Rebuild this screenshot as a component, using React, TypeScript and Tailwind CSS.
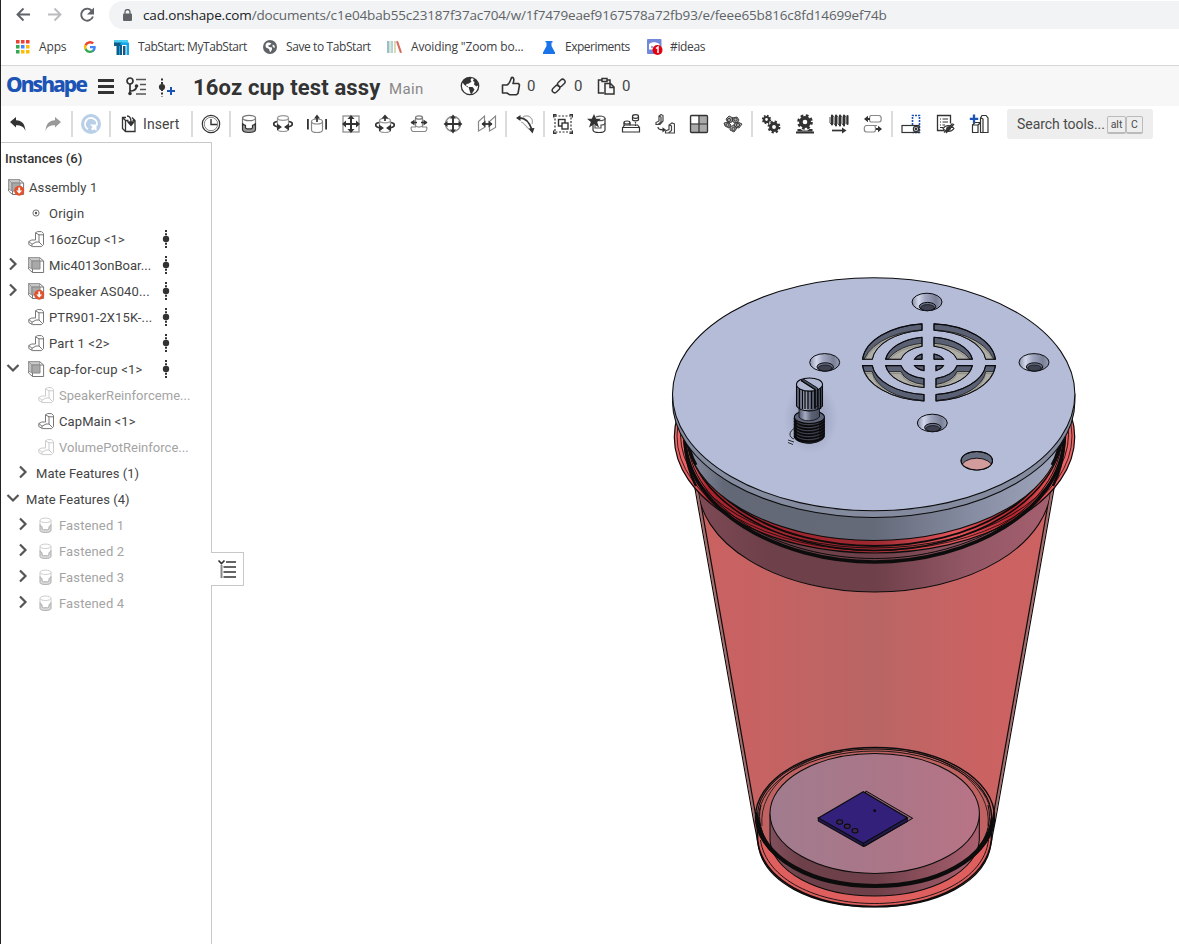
import React from "react";

const INK = "#333";

function Tool({ children, cell = "w-[34px]" }: { children: React.ReactNode; cell?: string }) {
  return (
    <div className={`flex h-full shrink-0 items-center justify-center ${cell}`}>
      <svg width="20" height="20" viewBox="0 0 20 20" fill="none" stroke={INK} strokeWidth="1.200">
        {children}
      </svg>
    </div>
  );
}

function Sep() {
  return (
    <div className="flex w-1 shrink-0 justify-center">
      <div className="h-[26px] w-[2px] bg-[#dcdcdc]" />
    </div>
  );
}

function GearShape({ cx, cy, r }: { cx: number; cy: number; r: number }) {
  return (
    <g>
      <circle cx={cx} cy={cy} r={r * 0.66} strokeWidth={r * 0.58} />
      <circle cx={cx} cy={cy} r={r * 1.02} strokeWidth={r * 0.45} strokeDasharray={`${r * 0.42} ${r * 0.381}`} />
    </g>
  );
}

function Toolbar() {
  return (
    <div className="flex h-9 items-center">
      <Tool cell="w-[34px]">
        <path d="M2 8 8 3v3.200c6 .3 9 3.500 9.500 11-1.600-4.600-4.500-5.800-9.500-5.900V13.500Z" fill={INK} stroke="none" />
      </Tool>
      <Tool cell="w-[35px]">
        <path d="M18 8 12 3v3.200c-6 .3-9 3.500-9.500 11 1.600-4.600 4.500-5.800 9.500-5.900v2.200Z" fill="#999" stroke="none" />
      </Tool>
      <Sep />
      <Tool>
        <circle cx="10" cy="10" r="10" fill="#b9cfe8" stroke="none" />
        <path d="M7 15.200A6 6 0 1 1 15.800 11.500" stroke="#fff" strokeWidth="1.900" />
        <path d="M9 10.500h6.500v6.500l-2.300-1.800-1.700 1.300-1.500-1.700 1.500-1.600Z" fill="#fff" stroke="none" />
      </Tool>
      <Sep />
      <div className="flex w-[78px] items-center pl-[9px]">
        <svg width="17" height="20" viewBox="0 0 17 20" fill="none" stroke={INK} strokeWidth="1.300">
          <path d="M5 3.500H1.500v11l3 3H14v-11l-3-3M1.500 3.500l3 3M4.500 6.500v11M4.500 6.500h3M11.500 6.500H14" />
          <path d="M6 2c3 0 4 2 4 6" />
          <path d="m7 8 3 3.500L13 8Z" fill={INK} />
        </svg>
        <span className="ml-[5px] text-[14px] tracking-[0.1px] text-[#444]">Insert</span>
      </div>
      <Sep />
      <Tool>
        <circle cx="10" cy="10" r="8.700" />
        <circle cx="10" cy="10" r="6.700" stroke="#666" strokeWidth=".8" />
        <path d="M10 5v5.500h6" strokeWidth="1.400" />
      </Tool>
      <Sep />
      <Tool>
        <path d="M3.500 9v6.500c0 1.800 3 3 6.500 3s6.500-1.200 6.500-3V9c0 1.500-1.500 2-3 2.400V14l-1.500.8H8L6.500 14v-2.600C4.500 11 3.500 10.500 3.500 9Z" fill="#999" />
        <path d="M3.500 9V4.200M16.500 9V4.200" stroke="#777" />
        <ellipse cx="10" cy="4" rx="6.500" ry="2.700" stroke="#777" />
      </Tool>
      <Tool>
        <path d="M4.500 4v11c0 1.500 2 2.500 5.500 2.500s5.500-1 5.500-2.500V4" stroke="#999" />
        <ellipse cx="10" cy="4" rx="5.500" ry="2.300" stroke="#999" />
        <path d="M4 7.500C-1 8.500-.5 12 5 13M16 7.500c5 1 4.500 4.500-1 5.500" strokeWidth="1.700" />
        <path d="m4 9.500 5 3.500L4 16.500ZM16 9.500 11 13l5 3.500Z" fill={INK} stroke="none" />
      </Tool>
      <Tool>
        <path d="M4.500 7.500v8.500c0 1.500 2 2.500 5.500 2.500s5.500-1 5.500-2.500V7.500" stroke="#888" />
        <ellipse cx="10" cy="7.500" rx="5.500" ry="2.500" stroke="#888" />
        <path d="M.9 5v10.500M19.100 5v10.500" strokeWidth="1.800" />
        <path d="M10 8V2" strokeWidth="1.700" />
        <path d="M7 4.500 10 .5l3 4Z" fill={INK} stroke="none" />
      </Tool>
      <Tool>
        <rect x="2" y="2" width="16" height="16" stroke="#888" />
        <path d="M10 2v16M2 10h16" strokeWidth="2" />
        <path d="M6.500 5 10 1l3.500 4ZM6.500 15l3.500 4 3.500-4ZM5 6.500 1 10l4 3.500ZM15 6.500l4 3.500-4 3.500Z" fill={INK} stroke="none" />
      </Tool>
      <Tool>
        <path d="M4.500 6.500v9.500c0 1.500 2 2.500 5.500 2.500s5.500-1 5.500-2.500V6.500" stroke="#999" />
        <ellipse cx="10" cy="6.500" rx="5.500" ry="2.300" stroke="#999" />
        <path d="M10 7V2M4 8.500C-1 9.500-.5 13 5 14M16 8.500c5 1 4.500 4.500-1 5.500" strokeWidth="1.700" />
        <path d="M6.500 4.500 10 .5l3.500 4ZM4 10.500 9 14l-5 3.500ZM16 10.500 11 14l5 3.500Z" fill={INK} stroke="none" />
      </Tool>
      <Tool>
        <path d="M6.500 4v9H2.500c-1 1 0 4.500 1.500 4.500h12c1.500 0 2.500-3.500 1.500-4.500h-4V4M6.500 12c2 1.200 5 1.200 7 0" stroke="#888" />
        <ellipse cx="10" cy="3.500" rx="3.500" ry="1.700" stroke="#777" />
        <path d="M2 8.500h6M12 8.500h6" strokeWidth="1.600" />
        <path d="M5.500 5.500 1.500 8.500l4 3ZM14.500 5.500l4 3-4 3Z" fill={INK} stroke="none" />
      </Tool>
      <Tool>
        <circle cx="10" cy="10" r="7.500" stroke="#888" strokeWidth="1.500" />
        <path d="M10 2v16M2 10h16" strokeWidth="1.900" />
        <path d="M7 4.500 10 .5l3 4ZM7 15.500l3 4 3-4ZM4.500 7 .5 10l4 3ZM15.500 7l4 3-4 3Z" fill={INK} stroke="none" />
      </Tool>
      <Tool>
        <path d="M1.500 17V7.500l6-5.500v11.500ZM12.500 17V7.500l6-5.500v11.500Z" stroke="#888" />
        <path d="M5 10h10" strokeWidth="1.800" />
        <path d="M8.500 6.500 4.500 10l4 3.500ZM11.500 6.500l4 3.500-4 3.500Z" fill={INK} stroke="none" />
      </Tool>
      <Sep />
      <Tool>
        <path d="M8 3c5-3 11 1 9 7M6 8c2 0 4 3 5 4 2 2 3 4 5 4" stroke="#aaa" />
        <path d="M2.500 4c7-1 12 4 14.500 12" strokeWidth="1.700" />
        <path d="M1 4 5.500 1v6ZM13.500 14.500l6-.5-2 5.500Z" fill={INK} stroke="none" />
      </Tool>
      <Sep />
      <Tool>
        <rect x="2" y="2" width="16" height="16" strokeDasharray="2 1.500" />
        <path d="M.5 3.500v-3h3M16.500.5h3v3M19.500 16.500v3h-3M3.500 19.500h-3v-3" strokeWidth="1.800" />
        <rect x="5.500" y="5.500" width="6.500" height="6.500" strokeWidth="1.400" />
        <rect x="9" y="9" width="6" height="6" fill="#fff" strokeWidth="1.400" />
      </Tool>
      <Tool>
        <path d="M6 6v10c0 1.500 2 2.500 6 2.500s6-1 6-2.500V4" />
        <path d="M9 3c4-2 9-.5 9 1.500S14 7 11 6.500M8 11v3h6v-3c2 0 4-.5 4-2" stroke="#555" />
        <path d="m7 0 2.200 4.800H14L10.200 8 12 13.500 7 10.300 2 13.500 3.800 8 0 4.800h4.800Z" fill={INK} stroke="none" />
      </Tool>
      <Tool>
        <path d="M2 13.500 3.500 11h13l2 2.500v4.500H1.500v-4.500ZM2 13.500h16" />
        <ellipse cx="6" cy="8.500" rx="3" ry="1.500" />
        <path d="M3 8.500v3M9 8.500v3" />
        <ellipse cx="14.500" cy="2.500" rx="3" ry="1.800" />
        <path d="M11.500 2.500v3.500c1.500 1.200 4.500 1.200 6 0V2.500" />
        <path d="M14.500 8v4" strokeDasharray="1.500 1" />
      </Tool>
      <Tool>
        <path d="M1 10.500V8.500l3-1.500V2l2-1.500 2 1v5.500l-3 3.500H1ZM4 2l2 1v5l-3 2.500" stroke="#444" />
        <path d="M10.500 19v-2l3.500-1.500V11l3-2 2.500 1v9ZM14 11l2.500 1v4.500l-3 2.500" stroke="#444" />
        <path d="M3 13c0 2.200 2 2.800 5 2.800" />
        <path d="m7.500 13.200 3.500 2.600-3.500 2.600Z" fill={INK} stroke="none" />
      </Tool>
      <Tool>
        <rect x="1.500" y="1.500" width="17" height="17" rx="1" fill="#aaa" stroke="#333" strokeWidth="1.300" />
        <rect x="2.500" y="2.500" width="7" height="7" fill="#fff" stroke="none" />
        <path d="M10 1.500v17M1.500 10h17" />
      </Tool>
      <Tool>
        <g fill="#aaa" strokeWidth=".9">
          <path d="m3 5 3-3 4 2-1 4-4 1ZM9 4l5-1 2 3-2 3-4-1ZM1 9l4-1 3 3-2 3-4-2ZM11 10l4-2 4 2-3 4-4-1ZM7 13l4-2 3 3-3 4-4-2Z" />
          <circle cx="6" cy="6" r="1.600" /><circle cx="12.500" cy="5.500" r="1.600" /><circle cx="4.500" cy="11" r="1.600" /><circle cx="15" cy="11" r="1.600" /><circle cx="10.500" cy="15" r="1.600" />
        </g>
      </Tool>
      <Sep />
      <Tool>
        <GearShape cx={5.5} cy={5.5} r={3.8} />
        <GearShape cx={13} cy={13} r={5.2} />
      </Tool>
      <Tool>
        <GearShape cx={10} cy={8} r={6.3} />
        <path d="M1 18.500h18" strokeWidth="2" />
        <path d="M2.500 17.500v-2.500h3l2 1.500h5l2-1.500h3v2.500Z" fill={INK} stroke="none" />
      </Tool>
      <Tool>
        <path d="M3 1.500v9M7 1.500v10M11 1.500v10M15 1.500v10M18.500 2v8" strokeWidth="2.100" strokeLinecap="round" />
        <path d="M1 3v6l2 2M3 1.500l2 1V10l2 1.500M7 1.500l2 1V10l2 1.500M11 1.500l2 1V10l2 1.500M15 1.500l2 1V10" strokeWidth=".9" />
        <path d="M3 16.500h12" strokeWidth="1.700" />
        <path d="m13 13.500 4.500 3-4.500 3Z" fill={INK} stroke="none" />
      </Tool>
      <Tool>
        <path d="M8 1.500h8c3 0 3 6.500 0 6.500H8C6 8 6 1.500 8 1.500ZM14 11.500H3.500c-3 0-3 6.500 0 6.500H11c2 0 2-6.500 0-6.500" stroke="#888" />
        <path d="M2 5h5M13 15h5" strokeWidth="1.900" />
        <path d="M5 1.800 1 5l4 3.200ZM15 11.800l4 3.200-4 3.200Z" fill={INK} stroke="none" />
      </Tool>
      <Sep />
      <Tool>
        <path d="M11.500 11V1.500h7v17h-7" stroke="#1b54b4" strokeWidth="1.600" strokeDasharray="2 1" />
        <rect x="1" y="11.500" width="17" height="7" />
        <circle cx="15" cy="15" r="2.600" /><circle cx="15" cy="15" r=".8" fill={INK} />
      </Tool>
      <Tool>
        <path d="M9 16.500H2.500v-15h13v8" strokeWidth="1.300" />
        <path d="M5 5h1M7.500 5H13M5 8h1M7.500 8H13M5 11h1M7.500 11H10M5 13.500h3" />
        <path d="M8 14.500c3-4 8-4 11 0-3 4-8 4-11 0ZM9 18.500l8.500-9M11 19l8-9" />
        <circle cx="13.500" cy="14.500" r="1.700" fill={INK} />
      </Tool>
      <Tool>
        <path d="M3.500 11v7.500H9V11ZM11.500 18.500V4l1.500-2.500h4l2 2.500v14.500ZM11.500 3.500 14 5v13.500M3.500 11 6 8.500h5.500M9 11l2.500-2.500" />
        <path d="M5 .5v8.500M.8 4.800h8.400" stroke="#1b54b4" strokeWidth="2.300" />
      </Tool>
      <div className="ml-[11px] flex h-[30px] w-[146px] items-center rounded-[3px] bg-[#eee] pl-[10px] text-[#4a4a4a]">
        <span className="w-[87px] whitespace-nowrap pt-[1px] text-[14px] tracking-[-0.050px]">Search tools...</span>
        <span className="ml-[3px] mt-[2px] flex text-[10.500px] leading-[15px]">
          <kbd className="w-[19px] rounded-[2px] border border-b-2 border-[#bbb] text-center font-[inherit]">alt</kbd>
          <kbd className="w-[17px] rounded-[2px] border border-b-2 border-[#bbb] text-center font-[inherit]">C</kbd>
        </span>
      </div>
    </div>
  );
}

function Browser() {
  return (
    <div className="h-[66px] border-b border-[#d6d7d9] bg-white font-['Open_Sans','Noto_Sans',sans-serif]">
      <div className="flex h-[29px] items-center pt-px">
        <svg className="ml-[14px]" width="80" height="18" viewBox="0 0 80 18" fill="none" strokeWidth="1.900">
          <path d="M15 8.500H2.500M8.500 2.500l-6 6 6 6" stroke="#5f6368" />
          <path d="M33 8.500h12.500M39.500 2.500l6 6-6 6" stroke="#babcbe" />
          <path d="M76.500 4.500a6 6 0 1 0 1.400 6" stroke="#5f6368" />
          <path d="M79 1.500v7h-7Z" fill="#5f6368" />
        </svg>
        <div className="ml-[14px] flex h-7 flex-1 items-center rounded-l-full bg-[#f1f3f4] pl-[14px]">
          <svg width="9" height="12" viewBox="0 0 9 12">
            <rect y="4.500" width="9" height="7.500" rx="1" fill="#5f6368" />
            <path d="M2 5V3a2.500 2.500 0 0 1 5 0v2" fill="none" stroke="#5f6368" strokeWidth="1.300" />
          </svg>
          <div className="ml-[11px] whitespace-nowrap text-[13.500px] tracking-[-0.150px] text-[#5f6368]">
            <span className="text-[#202124]">cad.onshape.com</span>/documents/c1e04bab55c23187f37ac704/w/1f7479eaef9167578a72fb93/e/feee65b816c8fd14699ef74b
          </div>
        </div>
      </div>
      <div className="flex h-9 items-center whitespace-nowrap text-[12px] tracking-[-0.150px] text-[#3c4043]">
        <svg className="ml-[15px] shrink-0" width="14" height="14" viewBox="0 0 14 14">
          <path d="M0 0h3.500v3.500H0ZM5 0h3.500v3.500H5ZM10 0h3.500v3.500H10Z" fill="#ea4335" />
          <path d="M0 5h3.500v3.500H0ZM0 10h3.500v3.500H0Z" fill="#34a853" />
          <path d="M5 5h3.500v3.500H5Z" fill="#4285f4" />
          <path d="M10 5h3.500v3.500H10ZM5 10h3.500v3.500H5ZM10 10h3.500v3.500H10Z" fill="#fbbc05" />
        </svg>
        <span className="ml-[9px] w-[45px]">Apps</span>
        <svg className="shrink-0" width="12" height="12" viewBox="0 0 24 24">
          <path fill="#4285f4" d="M23.500 12.300c0-.8-.1-1.600-.2-2.300H12v4.600h6.500c-.3 1.500-1.200 2.700-2.400 3.600v3h3.900c2.200-2.100 3.500-5.200 3.500-8.900Z" />
          <path fill="#34a853" d="M12 24c3.200 0 6-1.100 8-2.900l-3.900-3c-1.100.7-2.500 1.200-4.100 1.200-3.100 0-5.800-2.100-6.700-5H1.300v3.100C3.300 21.300 7.300 24 12 24Z" />
          <path fill="#fbbc05" d="M5.300 14.300a7.200 7.200 0 0 1 0-4.600V6.600h-4a12 12 0 0 0 0 10.800Z" />
          <path fill="#ea4335" d="M12 4.800c1.800 0 3.300.6 4.600 1.800L20 3.200A12 12 0 0 0 1.300 6.600l4 3.100c.9-2.900 3.600-4.900 6.700-4.900Z" />
        </svg>
        <svg className="ml-[18px] shrink-0" width="15" height="15" viewBox="0 0 15 15">
          <path d="M0 0h14v3H0Z" fill="#4bd0f2" />
          <path d="M0 2.500h8V5H5v10H2.500V6H0ZM9 6h2.500v9H9Z" fill="#145a86" />
          <path d="M5 5h3v10H5Z" fill="#145a86" /><path d="M6.500 2.500H15V5H6.500ZM5 6h1v9H5ZM12.500 5H15v10h-2.500Z" fill="#10a7e8" />
        </svg>
        <span className="ml-[9px] w-[125px] tracking-[-0.450px]">TabStart: MyTabStart</span>
        <svg className="shrink-0" width="14" height="14" viewBox="0 0 14 14">
          <circle cx="7" cy="7" r="7" fill="#5f6368" />
          <path d="M2.500 6c0-2 1-3.500 3-3.500l3 .8L7 5 5 5.500l1 1.500 3 .5v2L7.500 12H7l-1-3-3-1.500ZM9.500 4.500l2 1 .3 2.500-2-1Z" fill="#fff" />
        </svg>
        <span className="ml-[9px] w-[101px] tracking-[-0.400px]">Save to TabStart</span>
        <svg className="shrink-0" width="15" height="12" viewBox="0 0 15 12">
          <path d="M0 0h2.500v12H0Z" fill="#9bbfbe" /><path d="M3.500 0H6v12H3.500Z" fill="#b5d5d3" />
          <path d="M7 0h2v12H7Z" fill="#dddbb5" /><path d="m9 .5 2-.5 4 11.500-2 .5Z" fill="#d66a5e" />
        </svg>
        <span className="ml-[9px] w-[132px]">Avoiding "Zoom bo...</span>
        <svg className="shrink-0" width="12" height="13" viewBox="0 0 12 13">
          <path d="M2.500 0h7v1.500H8.500V5L12 11.500V13H0v-1.500L3.500 5V1.500h-1Z" fill="#1a73e8" />
        </svg>
        <span className="ml-[10px] w-[82px] tracking-[-0.500px]">Experiments</span>
        <svg className="shrink-0" width="16" height="16" viewBox="0 0 16 16">
          <rect width="14.500" height="15" rx="1" fill="#7289da" />
          <path d="M2 5c3-2.500 7-2.500 10.500 0v5.500H2Z" fill="#fff" />
          <circle cx="5" cy="8" r="1" fill="#7289da" />
          <circle cx="10.500" cy="11" r="5" fill="#e3000f" />
          <path d="m9 9.500 2-1.500v6" stroke="#fff" strokeWidth="1.500" fill="none" />
        </svg>
        <span className="ml-[7px] tracking-[-0.350px]">#ideas</span>
      </div>
    </div>
  );
}

function Header() {
  return (
    <div className="flex h-10 items-center whitespace-nowrap bg-[#f7f7f7] text-[#333]">
      <span className="ml-[5px] w-[92px] pb-[2px] font-['Noto_Sans',sans-serif] text-[21px] font-extrabold tracking-[-2px] text-[#1b54b4]">Onshape</span>
      <div className="flex w-4 flex-col gap-[3px] pt-[1px]">
        <i className="h-[3px] bg-[#333]" />
        <i className="h-[3px] bg-[#333]" />
        <i className="h-[3px] bg-[#333]" />
      </div>
      <svg className="ml-[12px] mt-[2px] shrink-0" width="21" height="20" viewBox="0 0 21 20" fill="none" stroke="#333" strokeWidth="1.700">
        <circle cx="4" cy="4" r="3" /><path d="M4 7v10M4 14c5 0 6.500-2 6.500-5" />
        <circle cx="4" cy="16.500" r="1.800" fill="#333" stroke="none" /><circle cx="10.500" cy="9" r="1.800" fill="#333" stroke="none" />
        <path d="M10 2.500h10M14 7.500h6M14 12.500h6M10 17h10" stroke="#555" strokeWidth="1.400" />
      </svg>
      <svg className="ml-[11px] mt-[3px] shrink-0" width="17" height="20" viewBox="0 0 17 20">
        <circle cx="4" cy="9" r="3.100" fill="#333" />
        <path d="M4 .5v18" stroke="#333" strokeWidth="2" strokeDasharray="2 1.500" />
        <path d="M13 9v8M9 13h8" stroke="#1b54b4" strokeWidth="2" />
      </svg>
      <span className="ml-[18px] w-[196px] pt-[2px] text-[22px] font-bold tracking-[0.150px]">16oz cup test assy</span>
      <span className="w-[71px] pt-[6px] text-[15px] tracking-[0.400px] text-[#888]">Main</span>
      <svg className="shrink-0" width="20" height="20" viewBox="0 0 20 20">
        <circle cx="10" cy="10" r="8.700" fill="#fff" stroke="#333" strokeWidth="1.300" />
        <path d="M2 6c1-2.500 4-4.500 6.500-4.500l3 .5-1 2 1 1.500L9 7.500 6.500 8 6 9.500l2 1v1L4.500 9ZM8.500 11l4 0 2 2.500-1.500 2.500-2 2.500-1-2.500ZM14 2.500l3 2.500 1.500 4-2 1.500-2.500-2 .5-2.500-1.500-1Z" fill="#333" />
      </svg>
      <svg className="ml-[21px] shrink-0" width="20" height="20" viewBox="0 0 20 20" fill="none" stroke="#333" strokeWidth="1.600">
        <path d="M1.500 9H6c3-1.500 3.500-4.500 4.500-7.500 2.500-.5 3 2 1.500 6h5.500l1 1.500-1.500 8.500-1.500 1.200H8.500L6 17H1.500Z" strokeLinejoin="round" />
      </svg>
      <span className="ml-[6px] w-[23px] text-[15px] text-[#444]">0</span>
      <svg className="shrink-0" width="18" height="18" viewBox="0 0 18 18" fill="none" stroke="#333" strokeWidth="1.400">
        <rect x="-4.300" y="-2.500" width="8.600" height="5" rx="2.500" transform="translate(11.300 6) rotate(-45)" />
        <rect x="-4.300" y="-2.500" width="8.600" height="5" rx="2.500" transform="translate(6 12) rotate(-45)" />
      </svg>
      <span className="ml-[6px] w-[23px] text-[15px] text-[#444]">0</span>
      <svg className="shrink-0" width="18" height="18" viewBox="0 0 18 18" fill="none" stroke="#333" strokeWidth="1.500">
        <path d="M7 16H1.500V3H5M10 3h3v3M5 1.500h5v3H5Z" /><path d="M8 6.500h5.500l3.500 3.500v7H8ZM13 7v3.500h4" fill="#f7f7f7" />
      </svg>
      <span className="ml-[7px] text-[15px] text-[#444]">0</span>
    </div>
  );
}

type Kind = "asm" | "asmLink" | "part" | "mate" | "origin" | "none";

function RowIcon({ kind, dim }: { kind: Kind; dim?: boolean }) {
  const c = dim ? "#ccc" : "#777";
  if (kind === "none") return null;
  return (
    <svg className="shrink-0" width="17" height="17" viewBox="0 0 17 17" fill="none" stroke={c} strokeWidth="1">
      {(kind === "asm" || kind === "asmLink") && (
        <>
          <path d="M.6.6h11l4 3.400v11.500H4.500L.6 12Z" fill="#fff" />
          <path d="M.6.6h11V4H4Z" fill="#c9c9c9" stroke="#999" />
          <path d="M.6.6 4 4v8L.6 10Z" fill="#c4c4c4" stroke="#999" />
          <path d="M4 4h8v8H4Z" fill="#a9a9a9" stroke="#888" />
          <path d="M4.500 15.500V12M12 4h3.600" />
        </>
      )}
      {kind === "asmLink" && (
        <>
          <circle cx="11.200" cy="11.800" r="5" fill="#e0512c" stroke="none" />
          <path d="M11.200 8.500v4" stroke="#fff" strokeWidth="1.800" /><path d="M8.200 11.500h6l-3 3.300Z" fill="#fff" stroke="none" />
        </>
      )}
      {kind === "part" && (
        <path d="M7.500 1.800 9.500.6h4l2 2v11l-2 2H4.500L.8 13.500v-3l3-1.500h3.700ZM7.500 1.800l3.500 2h4.500M11 3.800V11h-3l-4 2.200v2.300M.8 10.500l3.200 2.700M11 11l3.500 3.500" strokeLinejoin="round" />
      )}
      {kind === "mate" && (
        <>
          <path d="M2 7.500v6c0 1.200 2.500 2 5.500 2s5.500-.8 5.500-2v-6c0 1-1 1.700-2 2V12l-1.500.8h-4L4 12V9.500c-1-.3-2-1-2-2Z" fill="#ddd" stroke="#aaa" />
          <path d="M2 8V3.500M13 8V3.500" /><ellipse cx="7.500" cy="3.300" rx="5.500" ry="2.200" />
        </>
      )}
      {kind === "origin" && (
        <>
          <circle cx="8" cy="8" r="3.100" /><circle cx="8" cy="8" r="1.200" fill="#555" stroke="none" />
        </>
      )}
    </svg>
  );
}

type RowData = { label: string; kind: Kind; pad: string; track: string; open?: boolean; arrow?: boolean; dim?: boolean; dots?: boolean; root?: boolean };

const rows: RowData[] = [
  { label: "Assembly 1", kind: "asmLink", pad: "pl-[7px]", track: "tracking-[0.1px]", root: true },
  { label: "Origin", kind: "origin", pad: "pl-[4px]", track: "tracking-[0.2px]" },
  { label: "16ozCup <1>", kind: "part", pad: "pl-[4px]", track: "tracking-[0.05px]", dots: true },
  { label: "Mic4013onBoar...", kind: "asm", pad: "pl-[4px]", track: "tracking-[0.03px]", arrow: true, dots: true },
  { label: "Speaker AS040...", kind: "asmLink", pad: "pl-[4px]", track: "tracking-[0.15px]", arrow: true, dots: true },
  { label: "PTR901-2X15K-...", kind: "part", pad: "pl-[4px]", track: "tracking-[0.13px]", dots: true },
  { label: "Part 1 <2>", kind: "part", pad: "pl-[4px]", track: "tracking-[0.2px]", dots: true },
  { label: "cap-for-cup <1>", kind: "asm", pad: "pl-[4px]", track: "tracking-[0.25px]", arrow: true, open: true, dots: true },
  { label: "SpeakerReinforceme...", kind: "part", pad: "pl-[14px]", track: "tracking-[0.05px]", dim: true },
  { label: "CapMain <1>", kind: "part", pad: "pl-[14px]", track: "tracking-[0.1px]" },
  { label: "VolumePotReinforce...", kind: "part", pad: "pl-[14px]", track: "tracking-[0.02px]", dim: true },
  { label: "Mate Features (1)", kind: "none", pad: "pl-[14px]", track: "tracking-[0.03px]", arrow: true },
  { label: "Mate Features (4)", kind: "none", pad: "pl-[4px]", track: "tracking-[0.06px]", arrow: true, open: true },
  { label: "Fastened 1", kind: "mate", pad: "pl-[14px]", track: "tracking-[0.13px]", arrow: true, dim: true },
  { label: "Fastened 2", kind: "mate", pad: "pl-[14px]", track: "tracking-[0.13px]", arrow: true, dim: true },
  { label: "Fastened 3", kind: "mate", pad: "pl-[14px]", track: "tracking-[0.13px]", arrow: true, dim: true },
  { label: "Fastened 4", kind: "mate", pad: "pl-[14px]", track: "tracking-[0.13px]", arrow: true, dim: true },
];

function Sidebar() {
  return (
    <aside className="w-[211px] shrink-0 border-r border-t border-[#c8c8c8] bg-white text-[#333]">
      <div className="flex h-[31px] items-center pl-[4px] text-[13.200px] font-medium">Instances (6)</div>
      {rows.map((r) => (
        <div key={r.label} className={`flex h-[26px] items-center whitespace-nowrap text-[13px] ${r.pad} ${r.dim ? "text-[#a4a4a4]" : "text-[#444]"}`}>
          {!r.root && (
            <svg className={`shrink-0 ${r.kind === "none" ? "mr-[5px]" : "mr-[7px]"}`} width="16" height="16" viewBox="0 0 16 16" fill="none" stroke="#555" strokeWidth="2.200">
              {r.arrow && (r.open ? <path d="m2.500 4 5.500 5.500L13.500 4" /> : <path d="m5 1.500 5.500 5.500L5 12.500" />)}
            </svg>
          )}
          <RowIcon kind={r.kind} dim={r.dim} />
          <span className={`pt-[2px] ${r.kind === "none" ? "" : "ml-[4px]"} ${r.track}`}>{r.label}</span>
          {r.dots && (
            <svg className="ml-auto mr-[41px] shrink-0" width="8" height="18" viewBox="0 0 8 18">
              <circle cx="4" cy="9" r="3.200" fill="#333" />
              <path d="M4 0v18" stroke="#333" strokeWidth="2" strokeDasharray="2 1.200" />
            </svg>
          )}
        </div>
      ))}
    </aside>
  );
}

const G = { x: 929, y: 362.4 };

function slot(ox: number, oy: number, ix: number, iy: number, sx: number, sy: number) {
  const cx = G.x + (sy > 0 ? 1 : -1);
  const gx = 6;
  const gy = 3.2;
  const yAt = (rx: number, ry: number) => G.y + sy * ry * Math.sqrt(1 - (gx / rx) ** 2);
  const xAt = (rx: number, ry: number) => G.x + sx * rx * Math.sqrt(1 - (gy / ry) ** 2);
  const vx = cx + sx * gx;
  const hy = G.y + sy * gy;
  const sweep = sx * sy > 0 ? 0 : 1;
  const start = `M${vx} ${yAt(ox, oy)}A${ox} ${oy} 0 0 ${sweep} ${xAt(ox, oy)} ${hy}`;
  if (!ix) return `${start}H${vx}Z`;
  return `${start}H${xAt(ix, iy)}A${ix} ${iy} 0 0 ${1 - sweep} ${vx} ${yAt(ix, iy)}Z`;
}

function Grille() {
  const rings = [
    [66.7, 38.7, 57, 32.3],
    [43.7, 25.3, 28.5, 16.5],
    [15.5, 9, 0, 0],
  ];
  const quads = [[-1, -1], [1, -1], [-1, 1], [1, 1]];
  return (
    <g>
      {rings.flatMap((r, i) =>
        quads.map(([sx, sy], j) => {
          const d = slot(r[0], r[1], r[2], r[3], sx, sy);
          const id = `slot${i}${j}`;
          return (
            <g key={id}>
              <clipPath id={id}><path d={d} /></clipPath>
              <path d={d} fill="#5b6175" />
              <g clipPath={`url(#${id})`}>
                {i < 2 && <path d={d} transform="translate(0 6)" fill="#aeada6" stroke="#111" strokeWidth=".8" />}
                {i < 2 && <path d={d} transform="translate(0 8)" fill="none" stroke="#6a6a62" strokeWidth=".5" />}
              </g>
              <path d={d} fill="none" stroke="#0c0c10" strokeWidth=".95" />
            </g>
          );
        })
      )}
    </g>
  );
}

function Screw({ x, y }: { x: number; y: number }) {
  return (
    <g stroke="#0c0c10" strokeWidth="1">
      <ellipse cx={x} cy={y} rx="15" ry="8.800" fill="url(#sink)" />
      <ellipse cx={x + 0.5} cy={y + 4.5} rx="8.200" ry="4.100" fill="#6d7388" />
      <ellipse cx={x + 0.5} cy={y + 5.6} rx="6.800" ry="3" fill="#3d4150" strokeWidth=".7" />
    </g>
  );
}

function Knob() {
  return (
    <g stroke="#08080a">
      <ellipse cx="811" cy="418" rx="27" ry="36" fill="url(#ao)" stroke="none" />
      <path d="M795 428c-6 3-7 9-1 11M788 440l6 2M788 442.500l5 2" fill="none" strokeWidth=".8" />
      <path d="M794.300 418v19c2 5 12 7 18 6 7-1 12-4 12-8v-17Z" fill="#23252c" />
      {[0, 1, 2, 3, 4, 5, 6].map((i) => (
        <path key={i} d={`M794.300 ${418 + i * 3}c4 7 24 7 30.200 0`} fill="none" strokeWidth="1.700" />
      ))}
      {[0, 1, 2, 3, 4, 5].map((i) => (
        <path key={i} d={`M797 ${421.5 + i * 3}c5 4 15 4 22 1`} fill="none" stroke="#565b69" strokeWidth=".6" />
      ))}
      <ellipse cx="809.400" cy="417" rx="15" ry="6.500" fill="#60667a" />
      <path d="M799 407v10c3 5 16 5 20.500 0v-10Z" fill="url(#metal)" strokeWidth=".8" />
      <path d="M796.500 384v22c4 6 20 7 26 0v-22Z" fill="url(#metal)" />
      {[799.5, 802.5, 805, 808, 811.5, 815, 818, 820.5].map((x) => (
        <path key={x} d={`M${x} 387v22`} strokeWidth="1.300" />
      ))}
      <ellipse cx="809.500" cy="384.500" rx="13" ry="6.600" fill="#b0b7d2" />
      <path d="m801 380.500 14 9v18l2.500-1.500V388L804 379.500Z" fill="#4a4f60" strokeWidth=".9" />
      <path d="m801 380.500 14 9v18" fill="none" strokeWidth="1.300" />
    </g>
  );
}

function Model() {
  return (
    <svg className="block" width="967" height="802" viewBox="212 142 967 802" fill="none" stroke="#0c0c0c" strokeWidth="1.050">
      <defs>
        <linearGradient id="body" gradientUnits="userSpaceOnUse" x1="695" y1="0" x2="1055" y2="0">
          <stop offset="0" stopColor="#ca6161" /><stop offset=".15" stopColor="#c86262" />
          <stop offset=".5" stopColor="#b96565" /><stop offset=".65" stopColor="#c36464" /><stop offset=".8" stopColor="#cb6262" /><stop offset="1" stopColor="#cd6161" />
        </linearGradient>
        <linearGradient id="maroon" gradientUnits="userSpaceOnUse" x1="695" y1="0" x2="1055" y2="0">
          <stop offset="0" stopColor="#7e4a56" /><stop offset=".2" stopColor="#6e4049" />
          <stop offset=".5" stopColor="#6e4049" /><stop offset=".75" stopColor="#925664" /><stop offset="1" stopColor="#a66070" />
        </linearGradient>
        <linearGradient id="wall" gradientUnits="userSpaceOnUse" x1="686" y1="0" x2="1062" y2="0">
          <stop offset="0" stopColor="#8b91a5" /><stop offset=".1" stopColor="#636877" />
          <stop offset=".5" stopColor="#656a79" /><stop offset=".75" stopColor="#858ba0" /><stop offset="1" stopColor="#a0a6bd" />
        </linearGradient>
        <linearGradient id="rim" gradientUnits="userSpaceOnUse" x1="672" y1="0" x2="1075" y2="0">
          <stop offset="0" stopColor="#ef6a6a" /><stop offset=".05" stopColor="#ea5a5e" /><stop offset=".09" stopColor="#a8232c" /><stop offset=".5" stopColor="#9c2830" />
          <stop offset=".7" stopColor="#e3565b" /><stop offset=".85" stopColor="#b8232c" /><stop offset=".95" stopColor="#ea5a5e" /><stop offset="1" stopColor="#ef6a6a" />
        </linearGradient>
        <linearGradient id="discTop" x1="0" y1="0" x2="1" y2="0">
          <stop offset="0" stopColor="#a17c8e" /><stop offset=".5" stopColor="#a97688" /><stop offset="1" stopColor="#b87486" />
        </linearGradient>
        <linearGradient id="discWall" x1="0" y1="0" x2="1" y2="0">
          <stop offset="0" stopColor="#80505c" /><stop offset=".15" stopColor="#6e4049" />
          <stop offset=".5" stopColor="#6e4049" /><stop offset="1" stopColor="#aa6070" />
        </linearGradient>
        <linearGradient id="sink" x1="0" y1="0" x2="1" y2="0">
          <stop offset="0" stopColor="#8a90a8" /><stop offset=".22" stopColor="#d3d8ec" /><stop offset=".45" stopColor="#a0a6bf" />
          <stop offset=".8" stopColor="#7a8096" /><stop offset="1" stopColor="#9aa0b8" />
        </linearGradient>
        <linearGradient id="metal" x1="0" y1="0" x2="1" y2="0">
          <stop offset="0" stopColor="#50566a" /><stop offset=".3" stopColor="#a5abc2" /><stop offset=".6" stopColor="#5c6275" /><stop offset="1" stopColor="#4c5161" />
        </linearGradient>
        <radialGradient id="ao"><stop offset="0" stopColor="#8087a5" stopOpacity=".6" /><stop offset=".5" stopColor="#8087a5" stopOpacity=".35" /><stop offset="1" stopColor="#8087a5" stopOpacity="0" /></radialGradient>
        <clipPath id="bodyClip"><path d="M674 420 698.300 490 756.500 820H992.500L1050.700 490 1075 420Z" /></clipPath>
        <clipPath id="thru"><ellipse cx="976.800" cy="460.700" rx="15.700" ry="9.300" /></clipPath>
      </defs>

      <path d="M693.500 480 753.500 820 758 843C762 882 812 907 874.500 907S987 882 991 843L995.500 820 1055.500 480Z" fill="url(#body)" strokeWidth="1.200" />
      <path d="M696.800 490 755 820M1052.200 490 994 820" strokeWidth="2" stroke="#a07070" />
      <path d="M698.500 490 756.500 820M1050.500 490 992.500 820" strokeWidth="1.200" />

      <g clipPath="url(#bodyClip)">
        <ellipse cx="874.500" cy="485" rx="176.500" ry="107" fill="url(#maroon)" />
      </g>

      <path d="M758.500 842C764 884 818 906 874.500 906S985 884 990.500 842L989 800H760Z" fill="#df5f5f" stroke="none" />
      <ellipse cx="874.500" cy="816" rx="117" ry="67" fill="#c06262" />
      <ellipse cx="875" cy="817" rx="119.500" ry="69.500" strokeWidth="1.400" />
      <ellipse cx="875" cy="818" rx="116.500" ry="67" strokeWidth=".9" />
      <path d="M762 826c-4-40 40-70 80-74M988 826c4-40-40-70-80-74" strokeWidth=".8" />
      <path d="M770 814v26a104.700 57.800 0 0 0 209.300 0v-26Z" fill="url(#discWall)" />
      <ellipse cx="874.700" cy="813.400" rx="104.700" ry="60" fill="url(#discTop)" />
      <path d="M756 812C755 853 806 886 875 886S995 853 994 812" strokeWidth="2.200" />
      <path d="M757 818C762 859 812 886 875 886S988 859 993 818" strokeWidth="4.200" />
      <path d="M757.500 825v15C762 880 812 906.500 874.500 906.500S987 880 991.500 840v-15" strokeWidth="1.700" />
      <path d="M760.500 840C766 880 818 903.500 874.500 903.500S984 880 988.500 840" strokeWidth=".9" />
      <path d="M761 805c-4 16 1 29 7 39M988 805c4 16-1 29-7 39" strokeWidth="1" />

      <path d="m866 791 46.700 27.300L864.500 846.500 863 842l44-24.500-42-24Z" fill="#8d6274" strokeWidth="1" />
      <path d="M818.300 818v3l45 25.500 44-25v-3.500Z" fill="#221a50" />
      <path d="m818.300 818 45-26.300 44 26-44 25.600Z" fill="#32207b" />
      <path d="M863.300 843.300v3.200" />
      {[[839.7, 822], [847.3, 826.3], [855, 830.7]].map(([x, y]) => (
        <ellipse key={x} cx={x} cy={y} rx="3" ry="2.200" fill="#3a2556" />
      ))}
      <circle cx="874.700" cy="810.700" r=".9" fill="#0c0c0c" />

      <ellipse cx="874.500" cy="437" rx="200.200" ry="116" fill="url(#rim)" strokeWidth="1.200" />
      <ellipse cx="874.500" cy="436" rx="197.500" ry="114.500" strokeWidth=".8" />
      <ellipse cx="874.500" cy="434.500" rx="194" ry="113.500" strokeWidth=".9" />
      <path d="M684 436C686 462 690 474 696 486M1065 436C1063 462 1059 474 1053 486" strokeWidth="2.600" />
      <path d="M685 440C688 510 778 562 874.500 562S1061 510 1064 440" strokeWidth="3.600" />
      <path d="M687 437C690 508 778 558.500 874.500 558.500S1059 508 1062 437" strokeWidth="1" />
      <path d="M686 432C690 500 778 550.500 874.500 550.500S1059 500 1063 432" strokeWidth="1.500" />
      <path d="M688 430C692 498 778 546 874.500 546S1057 498 1061 430" strokeWidth="1.900" />
      <path d="M686.500 425v8a187.500 107.500 0 0 0 375 0v-8Z" fill="url(#wall)" />
      <path d="M687 434c1 12 4 22 9 31M1061 434c-1 12-4 22-9 31" strokeWidth="3" />

      <path d="M672.500 394.300v7a201.200 116.200 0 0 0 402.400 0v-7Z" fill="#858b9f" />
      <ellipse cx="873.700" cy="394.300" rx="201.200" ry="116.500" fill="#b5bcd8" />

      <Grille />
      <Screw x={927} y={302} />
      <Screw x={824.7} y={362.4} />
      <Screw x={1034} y={362.4} />
      <Screw x={932.3} y={423} />
      <ellipse cx="976.800" cy="460.700" rx="15.700" ry="9.300" fill="#666c80" />
      <ellipse cx="976.800" cy="467.500" rx="15.700" ry="9.300" fill="#d29c9c" strokeWidth=".9" clipPath="url(#thru)" />
      <ellipse cx="976.800" cy="460.700" rx="15.700" ry="9.300" />
      <Knob />
    </svg>
  );
}

export default function App() {
  return (
    <div className="flex h-[944px] w-[1179px] flex-col overflow-hidden border-l border-[#222] bg-white font-['Roboto',sans-serif]">
      <Browser />
      <Header />
      <Toolbar />
      <div className="flex min-h-0 flex-1">
        <Sidebar />
        <main className="relative min-w-0 flex-1 overflow-hidden">
          <Model />
        </main>
      </div>
      <button className="absolute left-[211px] top-[552px] flex h-[34px] w-[33px] items-center justify-center border border-l-0 border-[#c8c8c8] bg-white" aria-label="Toggle list">
        <svg width="20" height="20" viewBox="0 0 20 20" fill="none" stroke="#333" strokeWidth="1.300">
          <path d="M9 3h10M6.500 8h12.500M6.500 13h12.500M6.500 18h12.500" />
          <path d="M4.500 6v13" stroke="#888" strokeWidth="2" /><path d="m1.500 1.500 3 3 3-3" strokeWidth="1.700" />
        </svg>
      </button>
    </div>
  );
}
